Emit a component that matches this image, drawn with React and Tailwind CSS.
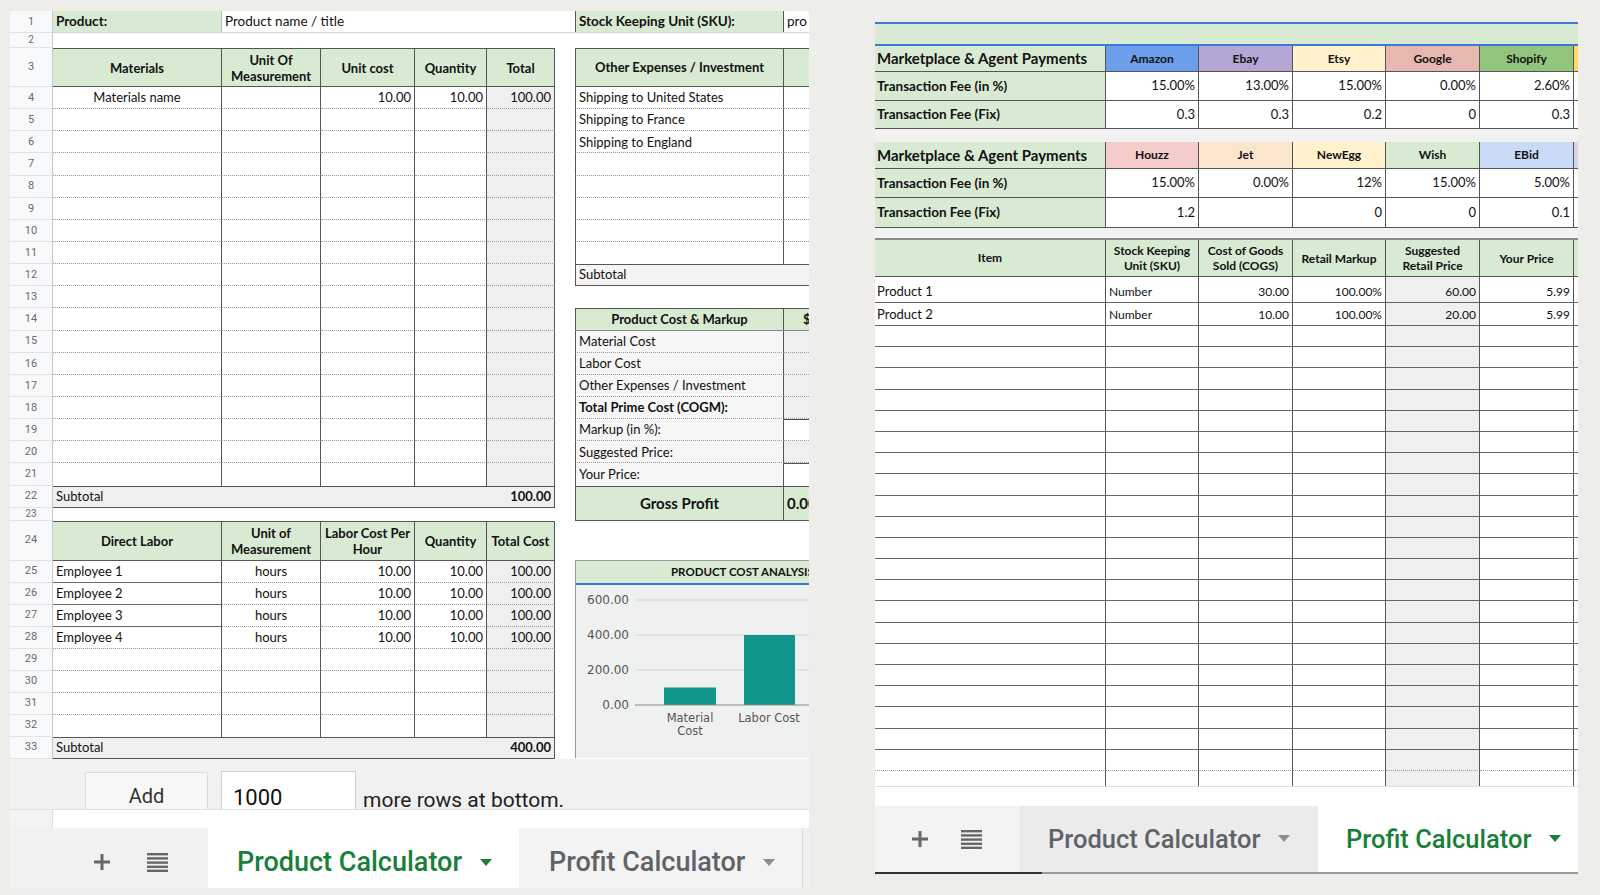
import React from 'react';

const VR = 'border-r border-r-[#555]';
const VL = 'border-l border-l-[#555]';
const DB = 'border-b border-b-[#9c9c9c] [border-bottom-style:dotted]';
const SB = 'border-b border-b-[#555]';
const ST = 'border-t border-t-[#555]';
const GR = 'bg-[#d9ead3]';
const W = ['w-[169px]', 'w-[99px]', 'w-[94px]', 'w-[72px]', 'w-[68px]'];
const RW = ['w-[93px]', 'w-[94px]', 'w-[93px]', 'w-[94px]', 'w-[94px]'];

const range = (n) => Array.from({ length: n }, (_, i) => i);

function RowNums() {
  const items = [
    ['1', 'h-[22px]'], ['2', 'h-[15px]'], ['3', 'h-[39px]'],
    ...range(18).map((i) => [String(i + 4), 'h-[22.15px]']),
    ['22', 'h-[22px]'], ['23', 'h-[13px]'], ['24', 'h-[40px]'],
    ...range(8).map((i) => [String(i + 25), 'h-[22px]']),
    ['33', 'h-[22px]'],
  ];
  return (
    <div className="w-[43px] shrink-0 flex flex-col bg-[#f8f9fa] border-r border-r-[#c8c8c8] font-['Roboto',sans-serif] text-[#6b6b6b]">
      {items.map(([n, h]) => (
        <div
          key={n}
          className={`${h} flex items-center justify-center border-b border-b-[#e3e3e3] ${n === '2' || n === '23' ? 'text-[10px] leading-[10px]' : 'text-[11px] pt-[1px]'}`}
        >
          {n}
        </div>
      ))}
    </div>
  );
}

function HeadRow({ labels, h }) {
  return (
    <div className={`flex ${h} ${GR} ${ST} ${SB}`}>
      {labels.map((l, i) => (
        <div key={i} className={`${W[i]} ${VR} flex items-center justify-center text-center font-bold text-[13px] leading-[16px]`}>
          <span>
            {l[0]}
            {l[1] && (
              <>
                <br />
                {l[1]}
              </>
            )}
          </span>
        </div>
      ))}
    </div>
  );
}

function DataRow({ h, cells, last, aSolid, aCenter }) {
  const b = last ? '' : DB;
  return (
    <div className={`flex ${h}`}>
      <div className={`${W[0]} ${VR} ${aSolid ? 'border-b border-b-[#6a6a6a]' : b} flex items-center pt-[1px] px-[3px] whitespace-nowrap ${aCenter ? 'justify-center' : ''}`}>{cells[0]}</div>
      <div className={`${W[1]} ${VR} ${b} flex items-center pt-[1px] justify-center`}>{cells[1]}</div>
      <div className={`${W[2]} ${VR} ${b} flex items-center pt-[1px] justify-end px-[3px]`}>{cells[2]}</div>
      <div className={`${W[3]} ${VR} ${b} flex items-center pt-[1px] justify-end px-[3px]`}>{cells[3]}</div>
      <div className={`${W[4]} ${VR} ${b} flex items-center pt-[1px] justify-end px-[3px] bg-[#efefef]`}>{cells[4]}</div>
    </div>
  );
}

function Subtotal({ value }) {
  return (
    <div className={`flex w-[502px] h-[22px] ${ST} ${SB} ${VR} bg-[#efefef] items-center justify-between px-[3px]`}>
      <span>Subtotal</span>
      <span className="font-bold">{value}</span>
    </div>
  );
}

function MatBlock() {
  const emp = ['Employee 1', 'Employee 2', 'Employee 3', 'Employee 4'];
  return (
    <div className="w-[502px] shrink-0 flex flex-col">
      <HeadRow h="h-[39px]" labels={[['Materials'], ['Unit Of', 'Measurement'], ['Unit cost'], ['Quantity'], ['Total']]} />
      {range(18).map((i) => (
        <DataRow
          key={i}
          h="h-[22.15px]"
          aCenter
          last={i === 17}
          cells={i === 0 ? ['Materials name', '', '10.00', '10.00', '100.00'] : ['', '', '', '', '']}
        />
      ))}
      <Subtotal value="100.00" />
      <div className="h-[13px]" />
      <HeadRow h="h-[40px]" labels={[['Direct Labor'], ['Unit of', 'Measurement'], ['Labor Cost Per', 'Hour'], ['Quantity'], ['Total Cost']]} />
      {range(8).map((i) => (
        <DataRow
          key={i}
          h="h-[22px]"
          last={i === 7}
          aSolid={i < 3}
          cells={i < 4 ? [emp[i], 'hours', '10.00', '10.00', '100.00'] : ['', '', '', '', '']}
        />
      ))}
      <Subtotal value="400.00" />
    </div>
  );
}

function Chart() {
  return (
    <div className="h-[198px] flex flex-col border-l border-t border-l-[#9a9a9a] border-t-[#9a9a9a]">
      <div className={`h-[22px] ${GR} flex items-center pl-[95px] font-bold text-[11.5px] whitespace-nowrap`}>PRODUCT COST ANALYSIS</div>
      <div className="h-[2px] bg-[#3c78d8]" />
      <div className="flex-1 bg-[#eff1f1] overflow-hidden">
        <svg width="234" height="173" className="block font-['DejaVu_Sans',sans-serif]">
          <line x1="59" y1="15" x2="234" y2="15" stroke="#d4d6d6" strokeWidth="1" />
          <line x1="59" y1="50" x2="234" y2="50" stroke="#d4d6d6" strokeWidth="1" />
          <line x1="59" y1="85" x2="234" y2="85" stroke="#d4d6d6" strokeWidth="1" />
          <rect x="88" y="102.5" width="52" height="17.5" fill="#12968b" />
          <rect x="168" y="50" width="51" height="70" fill="#12968b" />
          <line x1="59" y1="120" x2="234" y2="120" stroke="#8a8a8a" strokeWidth="1.2" />
          <g fontSize="12" fill="#555" textAnchor="end">
            <text x="53" y="19">600.00</text>
            <text x="53" y="54">400.00</text>
            <text x="53" y="89">200.00</text>
            <text x="53" y="124">0.00</text>
          </g>
          <g fontSize="11.5" fill="#555" textAnchor="middle">
            <text x="114" y="137">Material</text>
            <text x="114" y="150">Cost</text>
            <text x="193" y="137">Labor Cost</text>
          </g>
        </svg>
      </div>
    </div>
  );
}

function MidBlock() {
  const ship = ['Shipping to United States', 'Shipping to France', 'Shipping to England', '', '', '', '', ''];
  const labels = ['Material Cost', 'Labor Cost', 'Other Expenses / Investment', 'Total Prime Cost (COGM):', 'Markup (in %):', 'Suggested Price:', 'Your Price:'];
  return (
    <div className="w-[234px] shrink-0 flex flex-col overflow-hidden">
      <div className={`flex h-[39px] ${GR} ${ST} ${SB}`}>
        <div className={`w-[209px] shrink-0 ${VL} ${VR} flex items-center justify-center font-bold text-[13px]`}>Other Expenses / Investment</div>
        <div className="w-[25px] shrink-0" />
      </div>
      {ship.map((s, i) => (
        <div key={i} className="flex h-[22.15px]">
          <div className={`w-[209px] shrink-0 ${VL} ${VR} ${i === 7 ? '' : DB} flex items-center pt-[1px] px-[3px] whitespace-nowrap`}>{s}</div>
          <div className={`w-[25px] shrink-0 ${i === 7 ? '' : DB}`} />
        </div>
      ))}
      <div className={`h-[22.15px] ${ST} ${SB} ${VL} bg-[#f4f4f4] flex items-center px-[3px]`}>Subtotal</div>
      <div className="h-[22.15px]" />
      <div className={`flex h-[22.15px] ${GR} ${ST} border-b border-b-[#888]`}>
        <div className={`w-[209px] shrink-0 ${VL} ${VR} flex items-center justify-center font-bold`}>Product Cost &amp; Markup</div>
        <div className="w-[25px] shrink-0 flex items-center pl-[19px] font-bold">$</div>
      </div>
      {labels.map((l, i) => (
        <div key={i} className="flex h-[22.15px]">
          <div className={`w-[209px] shrink-0 ${VL} ${VR} ${i === 6 ? '' : DB} bg-[#f6f6f6] flex items-center pt-[1px] px-[3px] whitespace-nowrap ${i === 3 ? 'font-bold' : ''}`}>{l}</div>
          <div
            className={`w-[25px] shrink-0 ${i === 6 ? '' : DB} ${i === 4 || i === 6 ? 'bg-white border-t border-t-[#555]' : 'bg-[#efefef]'}`}
          />
        </div>
      ))}
      <div className={`flex h-[35px] ${GR} ${ST} ${SB}`}>
        <div className={`w-[209px] shrink-0 ${VL} ${VR} flex items-center justify-center font-bold text-[15px]`}>Gross Profit</div>
        <div className="w-[25px] shrink-0 flex items-center pl-[3px] font-bold text-[15px] whitespace-nowrap">0.00</div>
      </div>
      <div className="h-[39px]" />
      <Chart />
    </div>
  );
}

function PlusIcon() {
  return (
    <svg width="20" height="20" viewBox="0 0 20 20" className="block shrink-0">
      <path d="M10 2V18M2 10H18" stroke="#666" strokeWidth="3" />
    </svg>
  );
}

function ListIcon() {
  return (
    <svg width="21" height="20" viewBox="0 0 21 20" className="block shrink-0">
      <rect x="0" y="1" width="21" height="2.4" fill="#666" />
      <rect x="0" y="5.2" width="21" height="2.4" fill="#666" />
      <rect x="0" y="9.4" width="21" height="2.4" fill="#666" />
      <rect x="0" y="13.6" width="21" height="2.4" fill="#666" />
      <rect x="0" y="17.6" width="21" height="2.4" fill="#666" />
    </svg>
  );
}

function Arrow({ active }) {
  return (
    <span
      className={`ml-[18px] w-0 h-0 border-l-[6px] border-r-[6px] border-t-[7px] border-l-transparent border-r-transparent ${active ? 'border-t-[#188038]' : 'border-t-[#8a8d91]'}`}
    />
  );
}

function LeftSheet() {
  return (
    <div className="ml-[10px] mt-[11px] w-[799px] shrink-0 flex flex-col self-start text-[13px] text-[#111]">
      <div className="flex bg-white">
        <RowNums />
        <div className="w-[756px] flex flex-col">
          <div className="flex h-[22px] border-b border-b-[#d4d4d4]">
            <div className={`w-[169px] shrink-0 ${GR} border-r border-r-[#bbb] flex items-center px-[3px] font-bold text-[13.5px]`}>Product:</div>
            <div className="w-[353px] shrink-0 flex items-center px-[3px] text-[13.5px]">Product name / title</div>
            <div className={`w-[209px] shrink-0 ${GR} ${VL} ${VR} flex items-center px-[3px] font-bold text-[13.5px] whitespace-nowrap`}>Stock Keeping Unit (SKU):</div>
            <div className="w-[25px] shrink-0 flex items-center pl-[3px] text-[13.5px] overflow-hidden whitespace-nowrap">pro</div>
          </div>
          <div className="h-[15px]" />
          <div className="flex">
            <MatBlock />
            <div className="w-[20px] shrink-0" />
            <MidBlock />
          </div>
        </div>
      </div>
      <div className="h-[50px] bg-[#f1f1f1] flex items-start overflow-hidden font-['Roboto',sans-serif]">
        <div className="ml-[75px] mt-[13px] w-[123px] h-[42px] shrink-0 bg-[#f7f7f7] border border-[#dadada] flex justify-center pt-[11px] text-[20px] leading-[24px] text-[#333]">Add</div>
        <div className="ml-[13px] mt-[12px] w-[135px] h-[42px] shrink-0 bg-white border border-[#d0d0d0] pl-[11px] pt-[13px] text-[22px] leading-[26px] text-[#111]">1000</div>
        <div className="ml-[7px] mt-[29px] text-[21px] leading-[24px] text-[#222] whitespace-nowrap">more rows at bottom.</div>
      </div>
      <div className="h-[19px] flex border-t border-t-[#e0e0e0]">
        <div className="w-[43px] bg-[#f3f3f3] border-r border-r-[#ddd]" />
        <div className="flex-1 bg-white" />
      </div>
      <div className="h-[60px] bg-[#f1f1f1] flex font-['Roboto',sans-serif] font-medium">
        <div className="w-[198px] shrink-0 flex items-center pt-[9px]">
          <div className="ml-[82px]">
            <PlusIcon />
          </div>
          <div className="ml-[35px]">
            <ListIcon />
          </div>
        </div>
        <div className="w-[311px] shrink-0 bg-white flex items-center pt-[9px] pl-[29px] text-[27px] text-[#188038] whitespace-nowrap">
          Product Calculator
          <Arrow active />
        </div>
        <div className="w-[284px] shrink-0 bg-[#f3f3f3] border-r border-r-[#dcdcdc] flex items-center pt-[9px] pl-[30px] text-[27px] text-[#5f6368] whitespace-nowrap">
          Profit Calculator
          <Arrow />
        </div>
      </div>
    </div>
  );
}

function FeeTable({ names, colors, sliver, rows, hs }) {
  return (
    <div className="flex flex-col">
      <div className={`flex ${hs[0]} ${SB}`}>
        <div className={`w-[231px] shrink-0 ${GR} ${VR} flex items-center px-[2px] font-bold text-[15px] whitespace-nowrap`}>Marketplace &amp; Agent Payments</div>
        {names.map((n, i) => (
          <div key={n} className={`${RW[i]} shrink-0 ${colors[i]} ${VR} flex items-center justify-center font-bold text-[12px]`}>{n}</div>
        ))}
        <div className={`w-[4px] shrink-0 ${sliver}`} />
      </div>
      {rows.map((r, ri) => (
        <div key={ri} className={`flex ${hs[ri + 1]} ${SB}`}>
          <div className={`w-[231px] shrink-0 ${GR} ${VR} flex items-center px-[2px] font-bold text-[13.5px] whitespace-nowrap`}>{r[0]}</div>
          {r.slice(1).map((v, i) => (
            <div key={i} className={`${RW[i]} shrink-0 bg-white ${VR} flex items-center justify-end px-[3px] text-[13px]`}>{v}</div>
          ))}
          <div className="w-[4px] shrink-0 bg-white" />
        </div>
      ))}
    </div>
  );
}

function RightSheet() {
  const gridH = ['h-[26px]', 'h-[23px]', ...range(21).map(() => 'h-[21.2px]'), 'h-[15px]'];
  const data = [
    ['Product 1', 'Number', '30.00', '100.00%', '60.00', '5.99'],
    ['Product 2', 'Number', '10.00', '100.00%', '20.00', '5.99'],
  ];
  const heads = [['Stock Keeping', 'Unit (SKU)'], ['Cost of Goods', 'Sold (COGS)'], ['Retail Markup'], ['Suggested', 'Retail Price'], ['Your Price']];
  return (
    <div className="ml-[66px] mt-[22px] w-[703px] shrink-0 flex flex-col self-start text-[#111]">
      <div className="h-[2px] bg-[#3c78d8]" />
      <div className={`h-[20px] ${GR}`} />
      <div className="h-[2px] bg-[#3c78d8]" />
      <FeeTable
        names={['Amazon', 'Ebay', 'Etsy', 'Google', 'Shopify']}
        colors={['bg-[#6d9eeb]', 'bg-[#b4a7d6]', 'bg-[#fff2cc]', 'bg-[#e6b8af]', 'bg-[#93c47d]']}
        sliver="bg-[#ffd966]"
        hs={['h-[26px]', 'h-[29px]', 'h-[28px]']}
        rows={[
          ['Transaction Fee (in %)', '15.00%', '13.00%', '15.00%', '0.00%', '2.60%'],
          ['Transaction Fee (Fix)', '0.3', '0.3', '0.2', '0', '0.3'],
        ]}
      />
      <div className="h-[13px] bg-[#f1f1f1]" />
      <FeeTable
        names={['Houzz', 'Jet', 'NewEgg', 'Wish', 'EBid']}
        colors={['bg-[#f4cccc]', 'bg-[#fce5cd]', 'bg-[#fff2cc]', 'bg-[#d9ead3]', 'bg-[#c9daf8]']}
        sliver="bg-[#d9d2e9]"
        hs={['h-[27px]', 'h-[29px]', 'h-[30px]']}
        rows={[
          ['Transaction Fee (in %)', '15.00%', '0.00%', '12%', '15.00%', '5.00%'],
          ['Transaction Fee (Fix)', '1.2', '', '0', '0', '0.1'],
        ]}
      />
      <div className="h-[10px] bg-[#f1f1f1]" />
      <div className={`flex h-[39px] ${GR} border-t-2 border-t-[#8a8a8a] ${SB}`}>
        <div className={`w-[231px] shrink-0 ${VR} flex items-center justify-center font-bold text-[12px]`}>Item</div>
        {heads.map((l, i) => (
          <div key={i} className={`${RW[i]} shrink-0 ${VR} flex items-center justify-center text-center font-bold text-[12px] leading-[15px]`}>
            <span>
              {l[0]}
              {l[1] && (
                <>
                  <br />
                  {l[1]}
                </>
              )}
            </span>
          </div>
        ))}
        <div className="w-[4px] shrink-0" />
      </div>
      {gridH.map((h, ri) => {
        const r = data[ri] || ['', '', '', '', '', ''];
        const b = ri === 23 ? '' : ri === 22 ? DB : 'border-b border-b-[#666]';
        const pad = ri === 0 ? 'pt-[5px]' : ri === 1 ? 'pt-[2px]' : '';
        return (
          <div key={ri} className={`flex ${h} bg-white`}>
            <div className={`w-[231px] shrink-0 ${VR} ${b} ${pad} flex items-center px-[2px] text-[13px]`}>{r[0]}</div>
            <div className={`${RW[0]} shrink-0 ${VR} ${b} ${pad} flex items-center px-[3px] text-[12px]`}>{r[1]}</div>
            <div className={`${RW[1]} shrink-0 ${VR} ${b} ${pad} flex items-center justify-end px-[3px] text-[12px]`}>{r[2]}</div>
            <div className={`${RW[2]} shrink-0 ${VR} ${b} ${pad} flex items-center justify-end px-[3px] text-[12px]`}>{r[3]}</div>
            <div className={`${RW[3]} shrink-0 ${VR} ${b} ${pad} bg-[#efefef] flex items-center justify-end px-[3px] text-[12px]`}>{r[4]}</div>
            <div className={`${RW[4]} shrink-0 ${VR} ${b} ${pad} flex items-center justify-end px-[3px] text-[12px]`}>{r[5]}</div>
            <div className={`w-[4px] shrink-0 ${b}`} />
          </div>
        );
      })}
      <div className="h-[20px] bg-white border-t border-t-[#ddd]" />
      <div className="h-[66px] bg-[#f3f3f3] flex font-['Roboto',sans-serif] font-medium">
        <div className="w-[145px] shrink-0 flex items-center">
          <div className="ml-[35px]">
            <PlusIcon />
          </div>
          <div className="ml-[31px]">
            <ListIcon />
          </div>
        </div>
        <div className="w-[298px] shrink-0 bg-[#ebebeb] border-l border-l-[#e2e2e2] flex items-center pl-[27px] text-[25.5px] text-[#5f6368] whitespace-nowrap">
          Product Calculator
          <Arrow />
        </div>
        <div className="w-[260px] shrink-0 bg-white flex items-center pl-[28px] text-[25.5px] text-[#188038] whitespace-nowrap">
          Profit Calculator
          <Arrow active />
        </div>
      </div>
      <div className="h-[2px] flex">
        <div className="w-[167px] bg-[#333]" />
        <div className="flex-1 bg-[#9a9a9a]" />
      </div>
    </div>
  );
}

export default function App() {
  return (
    <div className="w-[1600px] h-[895px] bg-[#eeede9] flex overflow-hidden font-['Lato',sans-serif]">
      <LeftSheet />
      <RightSheet />
    </div>
  );
}
